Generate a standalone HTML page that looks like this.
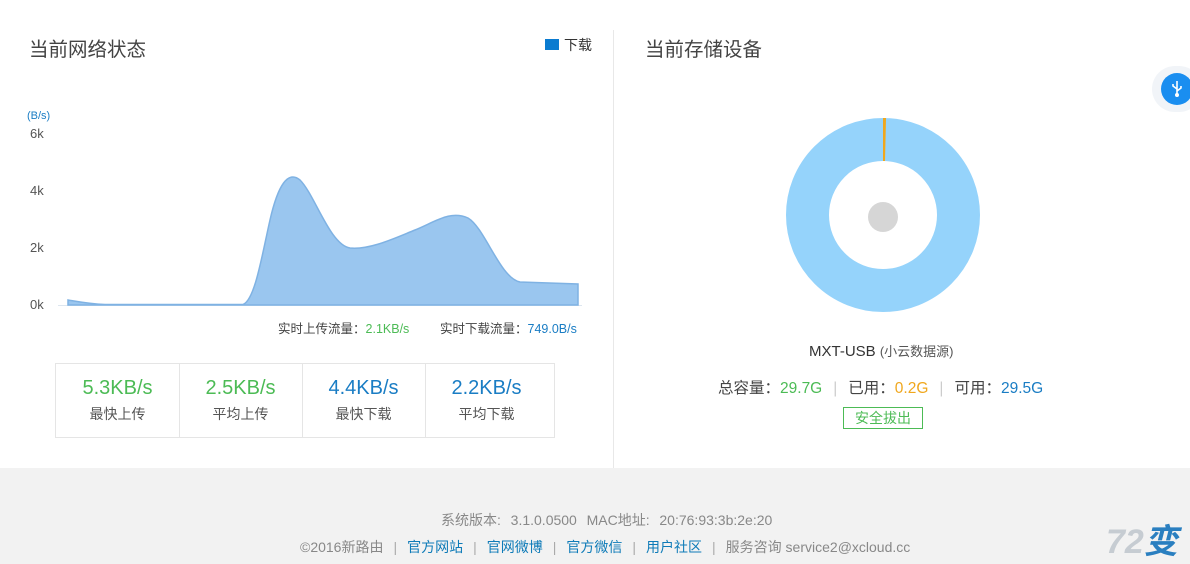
<!DOCTYPE html>
<html><head><meta charset="utf-8"><style>
body{margin:0;width:1190px;height:564px;background:#fff;font-family:"Liberation Sans","Noto Sans CJK SC",sans-serif;position:relative;overflow:hidden;color:#333}
.a{position:absolute;white-space:nowrap}
.t{font-size:19.5px;color:#444}
.ax{font-size:13px;color:#555}
.cell{position:absolute;top:363px;width:123px;height:74px;text-align:center;border-right:1px solid #e5e5e5}
.cell b{display:block;font-weight:normal;font-size:20px;margin-top:14px}
.cell span{display:block;font-size:14px;color:#555;margin-top:4px}
.g{color:#4cbb55}.bl{color:#1a7dc4}.o{color:#f0a71d}
.ft{font-size:14px;color:#888}
.ft a{color:#0e7bb8;text-decoration:none}
.sep{color:#aaa;margin:0 10px}
</style></head><body>
<div class="a t" style="left:29px;top:33px">当前网络状态</div>
<div class="a" style="left:545px;top:39px;width:14px;height:11px;background:#0a7bd0"></div>
<div class="a" style="left:564px;top:35px;font-size:14px;color:#333">下载</div>
<div class="a" style="left:27px;top:110px;font-size:11px;color:#1a7dc4">(B/s)</div>
<div class="a ax" style="left:30px;top:126px">6k</div>
<div class="a ax" style="left:30px;top:183px">4k</div>
<div class="a ax" style="left:30px;top:240px">2k</div>
<div class="a ax" style="left:30px;top:297px">0k</div>
<svg class="a" style="left:0;top:0" width="600" height="320">
<line x1="58" y1="305.5" x2="582" y2="305.5" stroke="#dde6ef" stroke-width="1"/>
<path d="M68,300 C80,302 90,304 105,304.5 L243,304.5 C255,300 262,255 270,220 C278,185 288,170 300,180 C315,195 330,245 350,248 C370,250 395,238 415,230 C435,222 450,210 468,218 C485,228 500,278 520,282 L578,284 L578,305 L68,305 Z" fill="#9ac6ef" stroke="#7fb2e3" stroke-width="1.5"/>
</svg>
<div class="a" style="left:278px;top:318px;font-size:12.5px;color:#444">实时上传流量：<span class="g">2.1KB/s</span></div>
<div class="a" style="left:440px;top:318px;font-size:12.5px;color:#444">实时下载流量：<span class="bl">749.0B/s</span></div>
<div class="a" style="left:55px;top:363px;width:498px;height:73px;border:1px solid #e5e5e5"></div>
<div class="cell" style="left:56px"><b class="g">5.3KB/s</b><span>最快上传</span></div>
<div class="cell" style="left:179px"><b class="g">2.5KB/s</b><span>平均上传</span></div>
<div class="cell" style="left:302px"><b class="bl">4.4KB/s</b><span>最快下载</span></div>
<div class="cell" style="left:425px;border-right:none"><b class="bl">2.2KB/s</b><span>平均下载</span></div>
<div class="a" style="left:613px;top:30px;width:1px;height:438px;background:#e8e8e8"></div>
<div class="a t" style="left:645px;top:33px">当前存储设备</div>
<div class="a" style="left:1152px;top:66px;width:50px;height:46px;border-radius:25px;background:#f1f4f8"></div>
<div class="a" style="left:1161px;top:73px;width:32px;height:32px;border-radius:16px;background:#1a8ef0"></div>
<svg class="a" style="left:1168px;top:79px" width="18" height="20"><path d="M9,2 V16 M9,10 L5,7 V5 M9,12 L13,9 V7" stroke="#fff" stroke-width="1.6" fill="none"/><circle cx="9" cy="16" r="2" fill="#fff"/></svg>
<svg class="a" style="left:780px;top:112px" width="206" height="206">
<circle cx="103" cy="103" r="75.5" fill="none" stroke="#95d3fb" stroke-width="43"/>
<path d="M103,6 L106,6 L105,49 L103,49Z" fill="#f0a71d"/>
<circle cx="103" cy="105" r="15" fill="#d6d6d6"/>
</svg>
<div class="a" style="left:809px;top:341px;font-size:15px;color:#333">MXT-USB <span style="font-size:13px;color:#555">(小云数据源)</span></div>
<div class="a" style="left:718px;top:376px;font-size:15.5px;color:#444">总容量：<span class="g">29.7G</span><span style="color:#ccc;margin:0 11px">|</span>已用：<span class="o">0.2G</span><span style="color:#ccc;margin:0 11px">|</span>可用：<span class="bl">29.5G</span></div>
<div class="a" style="left:843px;top:407px;width:78px;height:20px;border:1px solid #4cbb55;color:#4cbb55;font-size:14px;text-align:center;line-height:20px">安全拔出</div>
<div class="a" style="left:0;top:468px;width:1190px;height:96px;background:#f2f2f2"></div>
<div class="a ft" style="left:441px;top:510px;word-spacing:1px">系统版本:&nbsp; 3.1.0.0500&nbsp; MAC地址:&nbsp; 20:76:93:3b:2e:20</div>
<div class="a ft" style="left:300px;top:537px">©2016新路由<span class="sep">|</span><a>官方网站</a><span class="sep">|</span><a>官网微博</a><span class="sep">|</span><a>官方微信</a><span class="sep">|</span><a>用户社区</a><span class="sep">|</span>服务咨询 service2@xcloud.cc</div>
<div class="a" style="left:1106px;top:514px;font-size:34px;font-weight:bold;font-style:italic;color:#c6ccd2">72<span style="color:#2a7fc0">变</span></div>
</body></html>
